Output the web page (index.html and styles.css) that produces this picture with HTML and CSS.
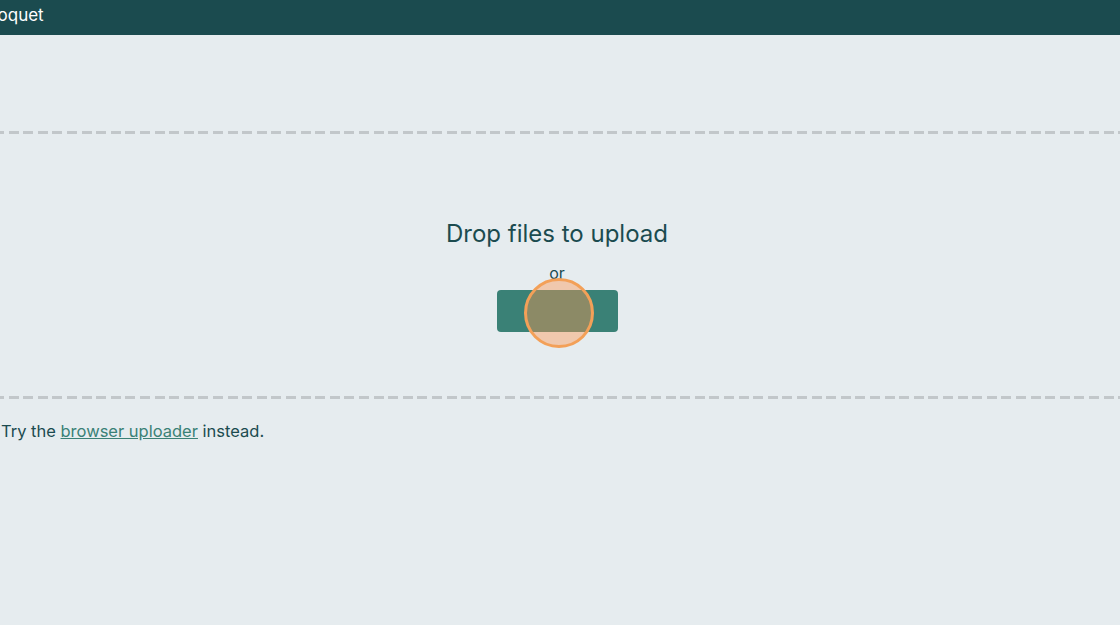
FILE: index.html
```html
<!DOCTYPE html>
<html>
<head>
  <title>Croquet - Upload</title>
  <link rel="stylesheet" href="styles.css">
</head>
<body>
  <div id="TopBar">
    <div id="PageTitle">Croquet</div>
  </div>

  <div id="MainFlow">
    <div class="dropZone">
      <div class="dropTitle">Drop files to upload</div>
      <div class="dropOr">or</div>
      <div class="pickWrap">
        <button class="pickButton" type="button"></button>
        <span class="clickMark"></span>
      </div>
    </div>
    <p class="altLink">Try the <a href="#">browser uploader</a> instead.</p>
  </div>
</body>
</html>
```

FILE: styles.css
```css
html, body {
    margin: 0;
    padding: 0;
}

body {
    background: #e6ecef;
    color: #1b4b4f;
    font-family: Inter, "Liberation Sans", sans-serif;
}

div#TopBar {
    background: #1b4b4f;
    height: 35px;
    color: white;
}

div#PageTitle {
    font-size: 17px;
    line-height: 30px;
    margin-left: -21px;
}

div#MainFlow {
    padding-top: 96px;
}

.dropZone {
    height: 262px;
    border-top: 3px solid transparent;
    border-bottom: 3px solid transparent;
    background:
        repeating-linear-gradient(to right, #c2c7ca 0 10px, transparent 10px 14.6px) top / 100% 3px no-repeat,
        repeating-linear-gradient(to right, #c2c7ca 0 10px, transparent 10px 14.6px) bottom / 100% 3px no-repeat;
    background-origin: border-box;
    display: flex;
    flex-direction: column;
    align-items: center;
    margin-left: -6px;
}

.dropTitle {
    font-size: 24px;
    margin-top: 85px;
}

.dropOr {
    font-size: 16px;
    margin-top: 15px;
}

.pickWrap {
    position: relative;
    margin-top: 7px;
}

.pickButton {
    display: block;
    width: 121px;
    height: 42px;
    border: none;
    border-radius: 4px;
    background: #3a8176;
}

.clickMark {
    position: absolute;
    left: 27px;
    top: -12px;
    width: 64px;
    height: 64px;
    border-radius: 50%;
    border: 3px solid #f3a058;
    background: rgba(255, 150, 80, 0.42);
}

.altLink {
    margin: 22px 0 0 1px;
    font-size: 16.5px;
}

.altLink a {
    color: #3a8176;
}
```
